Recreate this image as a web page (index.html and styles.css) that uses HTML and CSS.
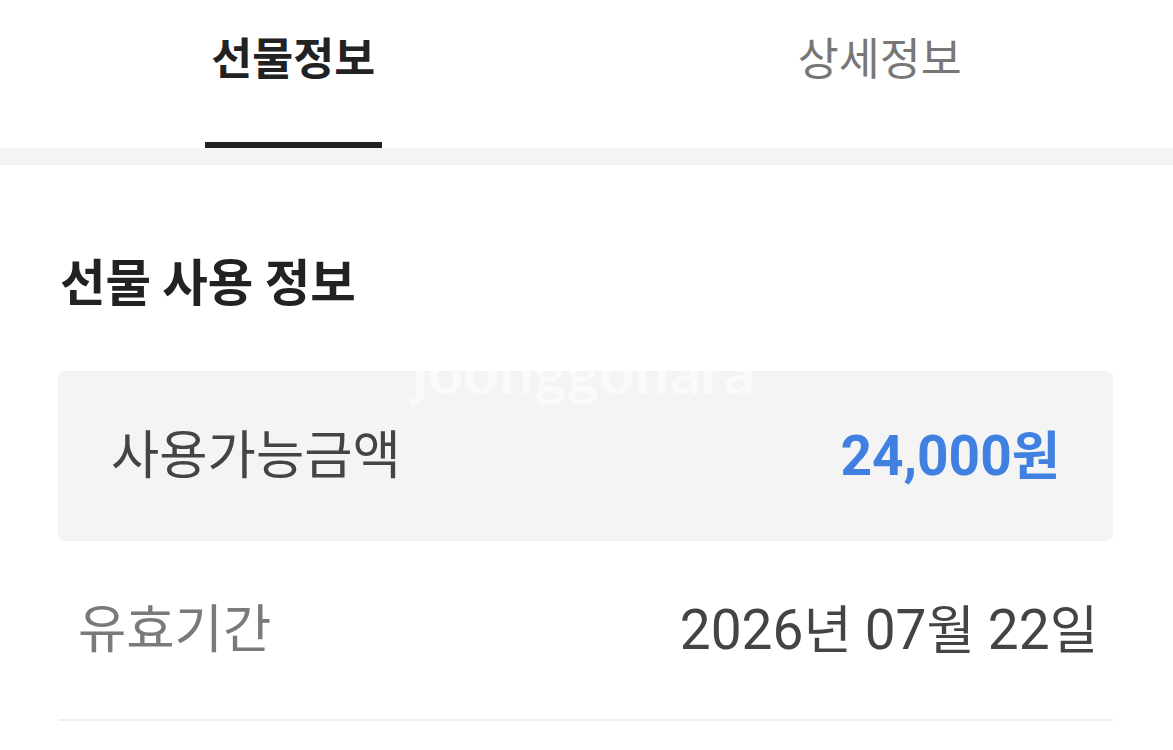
FILE: index.html
```html
<!DOCTYPE html>
<html>
    <head>
        <title>선물정보</title>
        <link rel="stylesheet" href="styles.css">
    </head>
    <body>
        <div class="tabs">
            <div class="tab active">
                <div class="label">선물정보</div>
                <div class="bar"></div>
            </div>
            <div class="tab">
                <div class="label">상세정보</div>
                <div class="bar"></div>
            </div>
        </div>
        <div class="divider"></div>
        <div class="section">
            <div class="title">선물 사용 정보</div>
            <div class="card">
                <div class="watermark">joonggonara</div>
                <div class="name">사용가능금액</div>
                <div class="amount"><span class="num">24,000</span>원</div>
            </div>
            <div class="row">
                <div class="key">유효기간</div>
                <div class="date"><span class="num">2026</span>년 <span class="num">07</span>월 <span class="num">22</span>일</div>
            </div>
        </div>
    </body>
</html>
```

FILE: styles.css
```css
body {
    margin: 0;
    font-family: Roboto, "Noto Sans CJK KR", sans-serif;
    background: #fff;
}
.tabs {
    display: flex;
    height: 148px;
}
.tab {
    flex: 1;
    display: flex;
    flex-direction: column;
    align-items: center;
    justify-content: space-between;
    font-family: "Noto Sans CJK KR", sans-serif;
    font-size: 44.5px;
    color: #777;
}
.tab .label {
    line-height: 48px;
    padding-top: 32px;
}
.tab .bar {
    width: 177px;
    height: 6px;
}
.tab.active {
    color: #222;
    font-weight: bold;
}
.tab.active .bar {
    background: #222;
}
.divider {
    height: 17px;
    background: #f4f4f4;
}
.section {
    padding: 0 60px 0 58px;
}
.title {
    margin-top: 91px;
    font-family: "Noto Sans CJK KR", sans-serif;
    font-size: 49.5px;
    line-height: 48px;
    font-weight: bold;
    color: #222;
    padding-left: 2px;
}
.card {
    position: relative;
    margin-top: 67px;
    height: 170px;
    background: #f4f4f4;
    border-radius: 6px;
    display: flex;
    align-items: center;
    justify-content: space-between;
    padding: 0 53px 0 53px;
    overflow: hidden;
}
.watermark {
    position: absolute;
    left: 354px;
    top: -38px;
    font-family: Lato, sans-serif;
    font-weight: bold;
    font-size: 62px;
    color: rgba(255, 255, 255, 0.5);
}
.name, .amount, .key, .date {
    font-size: 52.5px;
    line-height: 60px;
}
.name {
    color: #444;
}
.amount {
    color: #3f80e0;
    font-weight: bold;
}
.num {
    font-family: Roboto, sans-serif;
    font-size: 55px;
}
.row {
    height: 178px;
    border-bottom: 2px solid #eeeeee;
    display: flex;
    align-items: center;
    justify-content: space-between;
    padding: 0 15px 0 20px;
}
.key {
    color: #7a7a7a;
}
.date {
    color: #444;
}
```
